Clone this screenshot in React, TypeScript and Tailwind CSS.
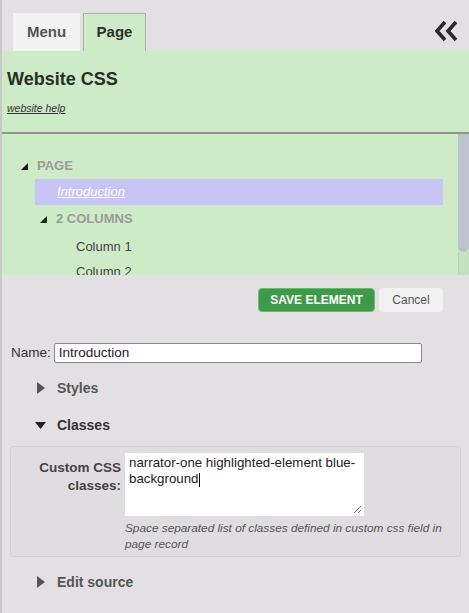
import React from 'react';

const Tri = ({ className = '' }: { className?: string }) => (
  <svg width="7" height="7" viewBox="0 0 7 7" className={className}>
    <polygon points="0,7 7,7 7,0" fill="#1a1a1a" />
  </svg>
);

const Caret = ({ open }: { open?: boolean }) =>
  open ? (
    <svg width="11" height="9" viewBox="0 0 11 9">
      <polygon points="0,1 11,1 5.5,8" fill="#222" />
    </svg>
  ) : (
    <svg width="8" height="12" viewBox="0 0 8 12">
      <polygon points="0,0 8,6 0,12" fill="#555" />
    </svg>
  );

const App: React.FC = () => {
  return (
    <div className="w-[469px] h-[613px] bg-[#e2e0e3] border-l-2 border-[#c8c7ca] font-['Liberation_Sans',Arial,sans-serif] overflow-hidden">
      {/* tabs */}
      <div className="h-[51px] flex items-end justify-between pl-[11px] pr-[10px]">
        <div className="flex gap-[3px]">
          <div className="w-[67px] h-[38px] bg-[#f3f3f3] flex items-center justify-center text-[15px] font-bold text-[#555]">
            Menu
          </div>
          <div className="w-[63px] h-[38px] bg-[#cdebc7] border border-b-0 border-[#a9b3a6] flex items-center justify-center text-[15px] font-bold text-[#2e2e2e]">
            Page
          </div>
        </div>
        <svg width="25" height="22" viewBox="0 0 25 22" className="mb-[9px]">
          <polyline points="11,2 3,11 11,20" fill="none" stroke="#2a2a2a" strokeWidth="3.6" />
          <polyline points="22,2 14,11 22,20" fill="none" stroke="#2a2a2a" strokeWidth="3.6" />
        </svg>
      </div>

      {/* green panel */}
      <div className="bg-[#cdebc7]">
        <div className="h-[81px] pl-[5px] pt-[18px]">
          <div className="text-[18px] font-bold text-[#2b2b2b] leading-[20px]">Website CSS</div>
          <div className="mt-[13px] text-[10.5px] italic underline text-[#333] leading-[12px]">website help</div>
        </div>
        <div className="h-[2px] bg-[#8e968b]" />
        <div className="h-[141px] flex overflow-hidden">
          <div className="flex-1 pt-[19px] pl-[19px] pr-[15px]">
            <div className="h-[26px] flex items-center gap-[9px]">
              <Tri />
              <span className="text-[13px] font-bold text-[#9b9b9b]">PAGE</span>
            </div>
            <div className="h-[26px] ml-[14px] bg-[#c9c4f6] flex items-center pl-[22px]">
              <span className="text-[13px] italic underline text-white">Introduction</span>
            </div>
            <div className="h-[28px] flex items-center gap-[9px] pl-[19px]">
              <Tri />
              <span className="text-[13px] font-bold text-[#9b9b9b]">2 COLUMNS</span>
            </div>
            <div className="h-[27px] flex items-center pl-[55px] text-[13px] text-[#444]">Column 1</div>
            <div className="h-[24px] flex items-center pl-[55px] text-[13px] text-[#444]">Column 2</div>
          </div>
          <div className="w-[11px] flex flex-col">
            <div className="h-[118px] bg-[#bcc3cf] rounded-b-[5px]" />
            <div className="flex-1 bg-[#c4e2bd] border-l border-[#b7d3b0]" />
          </div>
        </div>
      </div>

      {/* actions */}
      <div className="flex justify-end gap-[4px] pr-[26px] pt-[13px]">
        <button className="w-[117px] h-[24px] bg-[#3d9a46] rounded-[4px] text-white text-[12px] font-bold border border-[#6dbb72]">
          SAVE ELEMENT
        </button>
        <button className="w-[64px] h-[24px] bg-[#f1f1f1] rounded-[4px] text-[#555] text-[12px]">
          Cancel
        </button>
      </div>

      {/* name */}
      <div className="flex items-center mt-[31px] pl-[9px]">
        <span className="text-[13.5px] text-[#333] mr-[3px]">Name:</span>
        <div className="w-[368px] h-[20px] bg-white border border-[#8a8a8a] rounded-[2px] flex items-center pl-[4px] text-[13.5px] text-[#222]">
          Introduction
        </div>
      </div>

      <div className="flex items-center h-[20px] mt-[15px] pl-[35px] gap-[12px]">
        <Caret />
        <span className="text-[14px] font-bold text-[#555]">Styles</span>
      </div>

      <div className="flex items-center h-[20px] mt-[17px] pl-[33px] gap-[11px]">
        <Caret open />
        <span className="text-[14px] font-bold text-[#333]">Classes</span>
      </div>

      {/* classes panel */}
      <div className="ml-[8px] mr-[8px] mt-[11px] h-[111px] border border-[#d4d2d5] rounded-[3px] bg-[#dfdde0] flex pt-[6px]">
        <div className="w-[114px] pr-[4px] pt-[6px] text-right text-[13.5px] font-bold text-[#444] leading-[18px]">
          Custom CSS
          <br />
          classes:
        </div>
        <div className="flex flex-col">
          <div className="relative w-[239px] h-[63px] bg-white px-[4px] pt-[2px] text-[13.3px] text-[#222] leading-[16px]">
            narrator-one highlighted-element blue-
            <br />
            background<span className="inline-block w-[1px] h-[14px] bg-black align-middle" />
            <svg width="9" height="9" viewBox="0 0 9 9" className="absolute right-[2px] bottom-[2px]">
              <line x1="1" y1="8" x2="8" y2="1" stroke="#777" strokeWidth="1" />
              <line x1="5" y1="8" x2="8" y2="5" stroke="#777" strokeWidth="1" />
            </svg>
          </div>
          <div className="mt-[4px] text-[11.8px] italic text-[#555] leading-[16px] w-[330px]">
            Space separated list of classes defined in custom css field in page record
          </div>
        </div>
      </div>

      <div className="flex items-center h-[20px] mt-[15px] pl-[35px] gap-[12px]">
        <Caret />
        <span className="text-[14px] font-bold text-[#555]">Edit source</span>
      </div>
    </div>
  );
};

export default App;
